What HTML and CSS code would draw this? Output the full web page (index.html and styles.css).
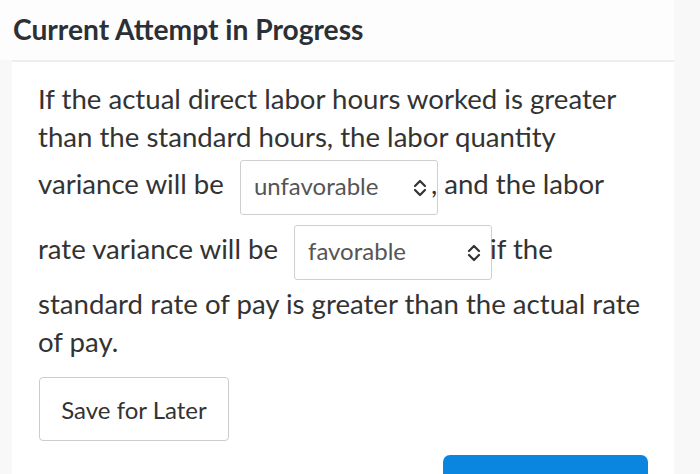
FILE: index.html
```html
<!DOCTYPE html>
<html>
<head>
<meta charset="utf-8">
<link rel="stylesheet" href="styles.css">
</head>
<body>
<div class="main">
  <div class="header"><h1 class="title">Current Attempt in Progress</h1></div>
  <div class="content">
    <p class="question">If the actual direct labor hours worked is greater than the standard hours, the labor quantity variance will be <span class="select sel1"><span class="sel-text">unfavorable</span><svg class="arrows" viewBox="0 0 16 20" width="16" height="20"><path d="M3 8 L8 3 L13 8 M3 12 L8 17 L13 12" fill="none" stroke="#333" stroke-width="2.2" stroke-linecap="round" stroke-linejoin="round"/></svg></span><span class="after a1">, and the labor</span> rate variance will be <span class="select sel2"><span class="sel-text">favorable</span><svg class="arrows" viewBox="0 0 16 20" width="16" height="20"><path d="M3 8 L8 3 L13 8 M3 12 L8 17 L13 12" fill="none" stroke="#333" stroke-width="2.2" stroke-linecap="round" stroke-linejoin="round"/></svg></span><span class="after a2">if the</span> standard rate of pay is greater than the actual rate of pay.</p>
    <div class="actions">
      <button class="btn-save">Save for Later</button>
    </div>
    <div class="submit-row">
      <button class="btn-submit"></button>
    </div>
  </div>
</div>
</body>
</html>
```

FILE: styles.css
```css
html, body {
  margin: 0;
  padding: 0;
}
body {
  background: #f8f8f8;
  font-family: Lato, "Open Sans", sans-serif;
  color: #333;
}
.main {
  width: 674px;
  min-height: 474px;
}
.header {
  background: #fdfdfd;
  height: 60px;
  padding: 0 13px;
  box-sizing: border-box;
}
.title {
  margin: 0;
  padding-top: 12px;
  font-size: 28.2px;
  font-weight: 700;
  color: #2b3036;
  line-height: 34px;
}
.content {
  margin-left: 12px;
  background: #fff;
  border-top: 2px solid #eeeeee;
  padding: 18px 20px 0 26px;
  min-height: 412px;
  box-sizing: border-box;
}
.question {
  margin: 0;
  font-size: 27.6px;
  line-height: 37.5px;
  color: #333;
  width: 612px;
}
.select {
  display: inline-flex;
  align-items: center;
  justify-content: space-between;
  box-sizing: border-box;
  width: 198px;
  height: 55px;
  border: 1px solid #cfcfcf;
  border-radius: 3px;
  padding: 0 9px 0 13px;
  vertical-align: middle;
  margin: 5px 0 5px 9px;
  font-size: 24px;
  line-height: 1;
  color: #555;
  background: #fff;
}
.sel-text {
  margin-top: -3px;
}
.a1 {
  margin-left: -7px;
}
.a2 {
  margin-left: -2px;
}
.actions {
  margin-top: 17px;
}
.btn-save {
  width: 190px;
  height: 64px;
  background: #fff;
  border: 1px solid #cccccc;
  border-radius: 4px;
  font-family: Lato, sans-serif;
  font-size: 24px;
  color: #333;
  margin-left: 1px;
}
.submit-row {
  display: flex;
  justify-content: flex-end;
  margin-top: 14px;
}
.btn-submit {
  width: 205px;
  height: 40px;
  background: #0a86e0;
  border: none;
  border-radius: 7px;
  margin-right: 6px;
}
```
